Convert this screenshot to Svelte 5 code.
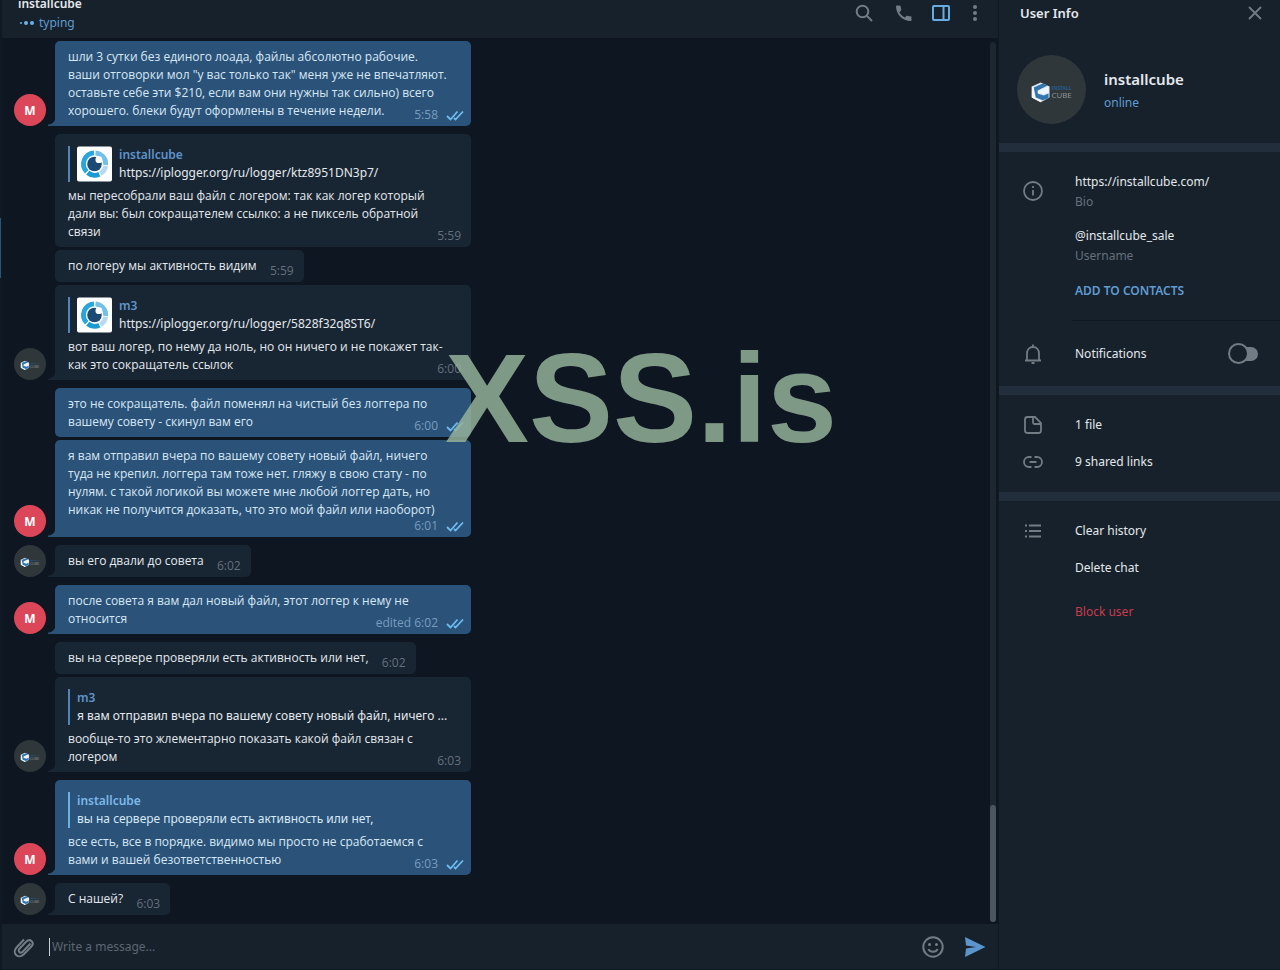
<script>
    let draft = $state("");
    let notifications = $state(false);

    const messages = [
        { out: true, avatar: "m", time: "5:58", text: "шли 3 сутки без единого лоада, файлы абсолютно рабочие.\nваши отговорки мол \"у вас только так\" меня уже не впечатляют.\nоставьте себе эти $210, если вам они нужны так сильно) всего\nхорошего. блеки будут оформлены в течение недели." },
        { time: "5:59", reply: { name: "installcube", text: "https://iplogger.org/ru/logger/ktz8951DN3p7/", thumb: true }, text: "мы пересобрали ваш файл с логером: так как логер который\nдали вы: был сокращателем ссылко: а не пиксель обратной\nсвязи" },
        { joined: true, time: "5:59", text: "по логеру мы активность видим" },
        { joined: true, avatar: "cube", time: "6:00", reply: { name: "m3", text: "https://iplogger.org/ru/logger/5828f32q8ST6/", thumb: true }, text: "вот ваш логер, по нему да ноль, но он ничего и не покажет так-\nкак это сокращатель ссылок" },
        { out: true, time: "6:00", text: "это не сокращатель. файл поменял на чистый без логгера по\nвашему совету - скинул вам его" },
        { out: true, joined: true, avatar: "m", time: "6:01", text: "я вам отправил вчера по вашему совету новый файл, ничего\nтуда не крепил. логгера там тоже нет. гляжу в свою стату - по\nнулям. с такой логикой вы можете мне любой логгер дать, но\nникак не получится доказать, что это мой файл или наоборот)" },
        { avatar: "cube", time: "6:02", text: "вы его двали до совета" },
        { out: true, avatar: "m", time: "edited 6:02", text: "после совета я вам дал новый файл, этот логгер к нему не\nотносится" },
        { time: "6:02", text: "вы на сервере проверяли есть активность или нет," },
        { joined: true, avatar: "cube", time: "6:03", reply: { name: "m3", text: "я вам отправил вчера по вашему совету новый файл, ничего ..." }, text: "вообще-то это жлементарно показать какой файл связан с\nлогером" },
        { out: true, avatar: "m", time: "6:03", reply: { name: "installcube", text: "вы на сервере проверяли есть активность или нет," }, text: "все есть, все в порядке. видимо мы просто не сработаемся с\nвами и вашей безответственностью" },
        { avatar: "cube", time: "6:03", text: "С нашей?" }
    ];
</script>

{#snippet cubeLogo()}
<svg class="logo" viewBox="0 0 70 70" aria-hidden="true">
    <path d="M24 28l9 4v11l-9 5-9-5V32z" fill="#d8e7f3"/>
    <path d="M15 32l9 4v12l-9-5z" fill="#f1f6fa"/>
    <path d="M17 33l9-4 5 2-10 5v3l6 2 5-2v5l-6 2-7-3z" fill="#3274ab"/>
    <path d="M22 36l10-4v6l-6 2z" fill="#eef5fb"/>
    <text x="35" y="36" font-size="5" font-weight="700" fill="#245b8c">INSTALL</text>
    <text x="35" y="44" font-size="8" fill="#8b9296">CUBE</text>
</svg>
{/snippet}

<div class="app">
    <div class="edge"><span></span></div>

    <main class="chat">
        <header class="chat-header">
            <div class="peer">
                <h1>installcube</h1>
                <p>
                    <svg width="17" height="8" viewBox="0 0 17 8" aria-hidden="true"><circle cx="3" cy="4" r="1"/><circle cx="8" cy="4" r="2"/><circle cx="14" cy="4" r="2"/></svg>
                    typing
                </p>
            </div>
            <nav class="tools">
                <button aria-label="Search">
                    <svg width="20" height="20" viewBox="0 0 20 20"><circle cx="8.5" cy="8.5" r="5.8"/><path d="M13 13l5 5"/></svg>
                </button>
                <button aria-label="Call">
                    <svg width="20" height="20" viewBox="0 0 20 20"><path class="solid" d="M3 2.5h2.6c.6 0 1 .4 1.100 1 .1 1.100.3 2 .6 3 .1.400 0 .800-.300 1.100L5.400 9.200c1.300 2.400 3 4.100 5.400 5.400l1.600-1.600c.300-.300.700-.400 1.100-.300 1 .3 1.900.5 3 .6.600.1 1 .5 1 1.100V17c0 .6-.5 1-1 1C8.700 18 2 11.300 2 3.500c0-.5.4-1 1-1z"/></svg>
                </button>
                <button class="small on" aria-label="Toggle info panel">
                    <svg width="20" height="20" viewBox="0 0 20 20"><rect x="2" y="3" width="16" height="14" rx="1"/><path d="M12.500 3v14"/></svg>
                </button>
                <button class="small" aria-label="More">
                    <svg width="20" height="20" viewBox="0 0 20 20"><g class="solid"><circle cx="10" cy="4" r="2"/><circle cx="10" cy="10" r="2"/><circle cx="10" cy="16" r="2"/></g></svg>
                </button>
            </nav>
        </header>

        <div class="history">
            <div class="messages">
                {#each messages as msg}
                <article class="row" class:joined={msg.joined}>
                    {#if msg.avatar === "m"}
                    <div class="avatar red">M</div>
                    {:else if msg.avatar}
                    <div class="avatar cube">{@render cubeLogo()}</div>
                    {:else}
                    <div class="avatar"></div>
                    {/if}
                    <div class="bubble" class:out={msg.out} class:tail={msg.avatar} class:long={msg.text.includes("\n")}>
                        {#if msg.reply}
                        <blockquote>
                            {#if msg.reply.thumb}
                            <svg class="thumb" viewBox="0 0 36 36" aria-hidden="true">
                                <rect width="36" height="36" rx="2" fill="#fff"/>
                                <g fill="none" stroke-width="5">
                                    <path d="M17.500 6.500A11.500 11.500 0 0 0 10 26" stroke="#27a5dc"/>
                                    <path d="M11 27a11.500 11.500 0 0 0 12 1.500" stroke="#1b9bd1"/>
                                    <path d="M24 28a11.500 11.500 0 0 0 5.500-8" stroke="#b4d9f0"/>
                                    <path d="M29.500 19A11.500 11.500 0 0 0 19 6.500" stroke="#71c0e8"/>
                                </g>
                                <circle cx="18" cy="18" r="7.500" fill="#1d4a75"/>
                                <circle cx="22.500" cy="13.500" r="3.500" fill="#fff"/>
                            </svg>
                            {/if}
                            <div>
                                <b>{msg.reply.name}</b>
                                <span>{msg.reply.text}</span>
                            </div>
                        </blockquote>
                        {/if}
                        <p>{msg.text}<i class="spacer"></i></p>
                        <div class="meta">
                            <time>{msg.time}</time>
                            {#if msg.out}
                            <svg width="18" height="12" viewBox="0 0 18 12" aria-label="Read"><path d="M1 7l3.500 3.500L11.500 2.500M8 9l1.500 1.500L17 2.500"/></svg>
                            {/if}
                        </div>
                    </div>
                </article>
                {/each}
            </div>
            <div class="track"><div class="handle"></div></div>
        </div>

        <form class="composer" onsubmit={(e) => e.preventDefault()}>
            <button type="button" aria-label="Attach file">
                <svg width="28" height="24" viewBox="0 0 28 24"><path d="M20.500 8.500l-7.800 8.200c-2.400 2.300-5.500-.700-3.300-3l7-7.200c3.700-3.600 8.600 1.200 5 5l-7.800 8C8.300 24.600 1.500 18 6.500 12.500l7.500-8"/></svg>
            </button>
            <span class="caret"></span>
            <input type="text" bind:value={draft} placeholder="Write a message..." aria-label="Write a message">
            <button type="button" aria-label="Emoji">
                <svg width="24" height="24" viewBox="0 0 24 24"><circle cx="12" cy="12" r="9.700"/><path d="M7.500 14c1 3.500 8 3.500 9 0"/><g class="solid"><circle cx="8.500" cy="9.500" r="1.500"/><circle cx="15.500" cy="9.500" r="1.500"/></g></svg>
            </button>
            <button class="send" type="submit" aria-label="Send">
                <svg width="24" height="24" viewBox="0 0 24 24"><path d="M2 2l20.500 10L2 22l1-8.500 10-1.500-10-1.500z"/></svg>
            </button>
        </form>
    </main>

    <aside class="info">
        <header>
            <h2>User Info</h2>
            <button aria-label="Close">
                <svg width="20" height="20" viewBox="0 0 20 20"><path d="M4 4l12 12M16 4L4 16"/></svg>
            </button>
        </header>

        <section class="profile">
            <div class="photo">{@render cubeLogo()}</div>
            <div>
                <h3>installcube</h3>
                <p>online</p>
            </div>
        </section>

        <section>
            <div class="about">
                <svg width="24" height="24" viewBox="0 0 24 24"><circle cx="12" cy="12" r="9"/><path d="M12 11v5.500M12 7v2"/></svg>
                <div class="details">
                    <a href="https://installcube.com/">https://installcube.com/</a>
                    <small>Bio</small>
                    <a class="user" href="#username">@installcube_sale</a>
                    <small>Username</small>
                    <button class="add">ADD TO CONTACTS</button>
                </div>
            </div>
            <label class="notify">
                <svg width="24" height="24" viewBox="0 0 24 24"><path d="M4 18.500h16M6 18v-6.500C6 7.500 8.500 5 12 5s6 2.500 6 6.500V18M12 5V2.500M10.500 21h3"/></svg>
                <span>Notifications</span>
                <input type="checkbox" bind:checked={notifications}>
            </label>
        </section>

        <section class="list media">
            <button>
                <svg width="24" height="24" viewBox="0 0 24 24"><path d="M6.500 4H14l6 6v7.500a2.500 2.500 0 0 1-2.500 2.500h-11A2.500 2.500 0 0 1 4 17.500v-11A2.500 2.500 0 0 1 6.500 4M12 4v5.500a1.500 1.500 0 0 0 1.500 1.500H20"/></svg>
                1 file
            </button>
            <button>
                <svg width="24" height="24" viewBox="0 0 24 24"><path d="M10.500 7H8a5 5 0 0 0 0 10h2.500M13.500 7H16a5 5 0 0 1 0 10h-2.500M8.500 12h7"/></svg>
                9 shared links
            </button>
        </section>

        <section class="list">
            <button>
                <svg width="24" height="24" viewBox="0 0 24 24"><path d="M8 6.500h12M8 12h12M8 17.500h12M4 6.500h2M4 12h2M4 17.500h2"/></svg>
                Clear history
            </button>
            <button><span class="blank"></span>Delete chat</button>
            <button class="block"><span class="blank"></span>Block user</button>
        </section>
    </aside>

    <div class="watermark">XSS.is</div>
</div>

<style>
:global(body){
    margin: 0;
    background: #17212b;
}

*{
    box-sizing: border-box;
    margin: 0;
    padding: 0;
}

.app{
    position: relative;
    display: flex;
    min-height: 100vh;
    border-bottom: 1px solid #0f1923;
    font-family: "Noto Sans", "Open Sans", sans-serif;
    font-size: 12px;
    line-height: 18px;
    color: #e4e9ed;
    background: #17212b;
}

button, input{
    font: inherit;
    color: inherit;
    border: none;
    background: none;
}

button{
    cursor: pointer;
}

svg{
    display: block;
    flex: none;
    fill: none;
    stroke: #717c84;
    stroke-width: 2;
}

.solid{
    fill: #717c84;
    stroke: none;
}

/* Край списка чатов */
.edge{
    width: 2px;
    padding-top: 218px;
    background: #0f1923;
}

.edge span{
    display: block;
    width: 1px;
    height: 60px;
    background: #2b5278;
}

.chat{
    flex: 1;
    display: flex;
    flex-direction: column;
    min-width: 0;
    background: #0e1621;
}

.chat-header{
    display: flex;
    justify-content: space-between;
    height: 38px;
    overflow: hidden;
    background: #17212b;
}

.peer{
    display: flex;
    flex-direction: column;
    justify-content: flex-end;
    padding: 0 0 6px 16px;
}

.peer h1{
    font-size: 12px;
    line-height: 19px;
    font-weight: 600;
}

.peer p{
    display: flex;
    align-items: center;
    gap: 4px;
    font-size: 12px;
    line-height: 19px;
    color: #5f9bd1;
}

.peer svg{
    fill: #6ab3e6;
    stroke: none;
}

.tools{
    display: flex;
    gap: 14px;
    padding: 3px 13px 0 0;
    align-items: flex-start;
}

.tools button{
    display: flex;
    justify-content: center;
    width: 26px;
}

.tools .small{
    width: 20px;
}

.tools .on svg{
    stroke: #66ace0;
}

.history{
    flex: 1;
    display: flex;
}

.messages{
    flex: 1;
    display: flex;
    flex-direction: column;
    justify-content: flex-end;
    padding: 3px 12px 9px;
    font-family: "Open Sans", "Noto Sans", sans-serif;
}

.row{
    display: flex;
    align-items: flex-end;
    gap: 9px;
    margin-top: 8px;
}

.row.joined{
    margin-top: 3px;
}

.row:first-child{
    margin-top: 0;
}

.avatar{
    flex: none;
    width: 32px;
    border-radius: 50%;
    overflow: hidden;
}

.avatar.red{
    height: 32px;
    line-height: 33px;
    text-align: center;
    font-weight: 700;
    color: #fff;
    background: #dc4659;
}

.avatar.cube, .photo{
    height: 32px;
    background: #30373b;
}

.logo{
    width: 100%;
    height: 100%;
    stroke: none;
}

.bubble{
    position: relative;
    min-height: 32px;
    padding: 7px 12px 6px 13px;
    border-radius: 5px;
    background: #182533;
}

.bubble.long{
    width: 416px;
}

.bubble.out{
    color: #d7e8f7;
    background: #2b5278;
}

/* Хвостик сообщения */
.bubble.tail{
    border-bottom-left-radius: 0;
}

.tail::before{
    content: "";
    position: absolute;
    left: -7px;
    bottom: 0;
    width: 7px;
    height: 9px;
    background: radial-gradient(circle at 0 0, transparent 7px, #182533 8px);
}

.tail.out::before{
    background: radial-gradient(circle at 0 0, transparent 7px, #2b5278 8px);
}

.bubble p{
    display: flow-root;
    white-space: pre-line;
}

/* Место под время в последней строке */
.spacer{
    float: right;
    width: 35px;
    height: 12px;
}

.out .spacer{
    width: 60px;
}

.meta{
    position: absolute;
    right: 10px;
    bottom: 2px;
    display: flex;
    align-items: center;
    gap: 8px;
    color: #64707b;
}

.out .meta{
    right: 7px;
    color: #779dc0;
}

.meta svg{
    stroke: #6dbcf0;
    stroke-width: 1.8;
}

blockquote{
    display: flex;
    gap: 7px;
    margin: 5px 0;
    padding-left: 7px;
    border-left: 2px solid #4f86b9;
}

.out blockquote{
    border-color: #6ab0e2;
}

blockquote div{
    min-width: 0;
    font-family: "Noto Sans", "Open Sans", sans-serif;
}

blockquote b, blockquote span{
    display: block;
    white-space: nowrap;
}

blockquote b{
    font-weight: 600;
    color: #5f94c9;
}

.out b{
    color: #7db9e8;
}

.thumb{
    width: 35px;
    height: 36px;
    stroke: none;
}

.track{
    width: 6px;
    margin: 4px 2px 2px 0;
    display: flex;
    flex-direction: column;
    justify-content: flex-end;
    border-radius: 3px;
    background: #1d2730;
}

.handle{
    height: 117px;
    border-radius: 3px;
    background: #4b555f;
}

.composer{
    display: flex;
    align-items: center;
    height: 45px;
    padding: 0 11px 0 8px;
    background: #17212b;
}

.caret{
    width: 1px;
    height: 18px;
    margin-left: 11px;
    background: #c9d1d8;
}

.composer input{
    flex: 1;
    min-width: 0;
    margin-left: 2px;
    outline: none;
}

.composer input::placeholder{
    color: #5b6772;
    opacity: 1;
}

.composer .send{
    margin-left: 18px;
}

.send svg{
    fill: #5b95cb;
    stroke: none;
}

/* Панель профиля */
.info{
    width: 282px;
    border-left: 1px solid #0f1923;
}

.info header{
    display: flex;
    justify-content: space-between;
    padding: 4px 15px 0 21px;
    height: 38px;
}

h2{
    font-size: 13px;
    font-weight: 600;
}

.info header button{
    align-self: flex-start;
    margin-top: -1px;
}

.info svg{
    stroke-width: 1.8;
}

.info .logo{
    stroke: none;
}

.profile{
    display: flex;
    align-items: flex-start;
    gap: 18px;
    padding: 17px 18px 19px;
}

.profile .photo{
    width: 69px;
    height: 69px;
    border-radius: 50%;
}

.profile h3{
    margin-top: 12px;
    font-size: 15px;
    line-height: 24px;
    font-weight: 600;
}

.profile p{
    line-height: 24px;
    color: #5f9bd1;
}

section + section{
    border-top: 9px solid #232e3c;
}

.about{
    display: flex;
    gap: 27px;
    padding: 20px 0 0 22px;
}

.about svg{
    margin-top: 7px;
}

.details{
    flex: 1;
    display: flex;
    flex-direction: column;
    align-items: flex-start;
    padding: 0 0 19px 3px;
    line-height: 20px;
    border-bottom: 1px solid #0f1923;
}

.details a{
    color: inherit;
    text-decoration: none;
}

.details .user{
    margin-top: 14px;
}

small{
    font-size: 12px;
    color: #64707b;
}

.add{
    margin-top: 15px;
    line-height: 20px;
    font-weight: 600;
    color: #5f9bd1;
}

.notify{
    display: flex;
    align-items: center;
    height: 65px;
    padding: 0 22px;
    gap: 30px;
    cursor: pointer;
}

.notify span{
    flex: 1;
}

/* Переключатель */
.notify input{
    appearance: none;
    display: flex;
    align-items: center;
    width: 30px;
    height: 18px;
    cursor: pointer;
}

.notify input::before{
    content: "";
    flex: none;
    width: 17px;
    height: 17px;
    border: 2px solid #717c84;
    border-radius: 50%;
    background: #17212b;
    z-index: 1;
}

.notify input::after{
    content: "";
    flex: 1;
    height: 14px;
    margin-left: -4px;
    border-radius: 0 7px 7px 0;
    background: #717c84;
}

.notify input:checked{
    flex-direction: row-reverse;
}

.list{
    display: flex;
    flex-direction: column;
    padding: 11px 0;
}

.list.media{
    padding-bottom: 12px;
}

.list button{
    display: flex;
    align-items: center;
    gap: 30px;
    height: 37px;
    padding: 0 22px;
    text-align: left;
}

.blank{
    width: 24px;
}

.list .block{
    margin-top: 7px;
    color: #c63d4d;
}

.watermark{
    position: absolute;
    top: 329px;
    left: 2px;
    right: 0;
    text-align: center;
    font-family: "Liberation Sans", Arial, sans-serif;
    font-size: 126px;
    line-height: 140px;
    font-weight: 700;
    color: rgb(150, 180, 156);
    opacity: 0.83;
    pointer-events: none;
}
</style>
